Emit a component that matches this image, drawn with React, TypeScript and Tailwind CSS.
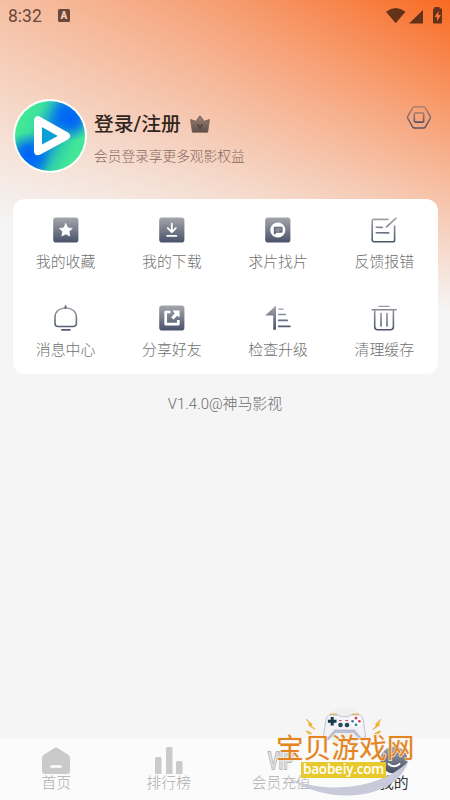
import React from "react";

const g = "url(#steel)";

function Glyph({ children }: { children: React.ReactNode }) {
  return (
    <svg className="h-[26px] w-[26px]" viewBox="0 0 26 26" fill="none" strokeWidth="1.6" strokeLinecap="round" strokeLinejoin="round">
      {children}
    </svg>
  );
}

const Tile = () => <rect x="0.2" y="0.4" width="25.2" height="25.2" rx="2.8" fill={g} />;

const entries: { label: string; icon: React.ReactNode }[] = [
  {
    label: "我的收藏",
    icon: (
      <>
        <Tile />
        <path d="M12.8 6.6l2 4.1 4.5.7-3.2 3.2.7 4.5-4-2.1-4 2.1.7-4.5-3.2-3.2 4.500-.7z" fill="#fff" stroke="#fff" strokeWidth="0.6" />
      </>
    ),
  },
  {
    label: "我的下载",
    icon: (
      <>
        <Tile />
        <path d="M12.8 6.800v8M8.800 11.200l4 4 4-4" stroke="#fff" strokeWidth="1.900" />
        <path d="M8.100 18.800h9.400" stroke="#fff" strokeWidth="1.700" />
      </>
    ),
  },
  {
    label: "求片找片",
    icon: (
      <>
        <Tile />
        <circle cx="12.800" cy="13" r="7.600" fill="#fff" />
        <path d="M9.600 9.800h7a1 1 0 0 1 1 1v4a1 1 0 0 1-1 1h-5l-2 1.600a.5.5 0 0 1-.8-.4v-6.200a1 1 0 0 1 .8-1z" fill="#656b7c" />
        <path d="M11 12h5M11 13.900h3" stroke="#b5b8c0" strokeWidth="0.900" />
      </>
    ),
  },
  {
    label: "反馈报错",
    icon: (
      <g stroke={g}>
        <path d="M17 2.400H3a1.800 1.800 0 0 0-1.800 1.800v18.800a1.800 1.800 0 0 0 1.800 1.800h18.800a1.800 1.800 0 0 0 1.800-1.800V9" />
        <path d="M25 1.200L15.500 9.800M5.300 10.300l6 .03M5.300 15.800l12.400.03" />
      </g>
    ),
  },
  {
    label: "消息中心",
    icon: (
      <g stroke={g}>
        <path d="M2 18.500v-6.300C2 6.600 6.300 3 12.700 3s10.700 3.600 10.700 9.200v6.300a3 3 0 0 1-3 3H5a3 3 0 0 1-3-3z" />
        <path d="M12.500.8h.5v2.600h-.5z" fill="#555c70" stroke="#555c70" strokeWidth="0.900" />
        <path d="M8.800 24.900h8.200" stroke="#555c70" />
      </g>
    ),
  },
  {
    label: "分享好友",
    icon: (
      <>
        <Tile />
        <path d="M11.500 7H6.700v12.200h12.600V15" stroke="#fff" strokeWidth="2.700" strokeLinecap="butt" />
        <path d="M13.700 5.600h6.900v6.700l-2.300-1.500-3.900 3.700-2.300-2.200 3.600-3.800z" fill="#fff" />
      </>
    ),
  },
  {
    label: "检查升级",
    icon: (
      <>
        <path d="M11 .6v24.200H8.200V10.500H.2z" fill={g} />
        <path d="M13.700 4.100l4.300.03" stroke="#969aa4" strokeWidth="1.300" />
        <path d="M13.700 9.500h6.700" stroke="#858a97" strokeWidth="1.400" />
        <path d="M13.700 15.400h8.600" stroke="#6a7183" strokeWidth="1.700" />
        <path d="M13.700 21.300h11.200" stroke="#535b70" strokeWidth="1.800" />
      </>
    ),
  },
  {
    label: "清理缓存",
    icon: (
      <>
        <path d="M8 1.300h10" stroke="#999ca4" strokeWidth="1.300" />
        <path d="M1.100 4.700h24" stroke="#858995" strokeWidth="1.500" />
        <path d="M3.700 5v16.800a3 3 0 0 0 3 3h12.700a3 3 0 0 0 3-3V5" stroke={g} />
        <path d="M10 8.500l.03 12.500M16 8.500l.03 12.500" stroke={g} strokeWidth="1.500" />
      </>
    ),
  },
];

function StatusBar() {
  return (
    <header className="flex h-8 items-center justify-between pl-2 pr-2 text-[#69483b]">
      <div className="flex items-center gap-4">
        <span className="w-[34px] font-[Roboto] text-[17.5px] leading-8">8:32</span>
        <span className="-mt-px flex h-[13px] w-3 items-center justify-center rounded-[1.5px] bg-[#69483b] font-[Roboto] text-[10px] font-black leading-none text-[#f7c9b0]">A</span>
      </div>
      <svg className="h-[18px] w-14" viewBox="0 0 56 18" fill="#653219">
        <path d="M0 4.700Q9.700-2.500 19.500 4.700L9.700 16.300z" />
        <path d="M37 3v13.500H23z" />
        <path fillRule="evenodd" d="M48.500 1.500V0h5v1.500H55a1 1 0 0 1 1 1v13a1 1 0 0 1-1 1h-7a1 1 0 0 1-1-1v-13a1 1 0 0 1 1-1zM52.500 4l-4 6h2.500v4l4-6h-2.500z" />
      </svg>
    </header>
  );
}

function Profile() {
  return (
    <section className="flex h-[74px] pl-[13px] pr-[18px]">
      <svg className="h-[74px] w-[74px]" viewBox="0 0 74 74">
        <defs>
          <linearGradient id="disc" x1="0" y1="0.250" x2="1" y2="0.750">
            <stop offset="0" stopColor="#47ee8c" />
            <stop offset=".24" stopColor="#3be0a0" />
            <stop offset=".45" stopColor="#1093dc" />
            <stop offset=".52" stopColor="#0a88e0" />
            <stop offset=".7" stopColor="#30d0aa" />
            <stop offset=".85" stopColor="#42e696" />
          </linearGradient>
          <radialGradient id="sky">
            <stop offset="0" stopColor="#0060fa" />
            <stop offset=".4" stopColor="#0066f5" stopOpacity=".85" />
            <stop offset="1" stopColor="#0877e8" stopOpacity="0" />
          </radialGradient>
          <clipPath id="round"><circle cx="37" cy="37" r="35" /></clipPath>
        </defs>
        <circle cx="37" cy="37" r="37" fill="#fff" />
        <circle cx="37" cy="37" r="35" fill="url(#disc)" />
        <g clipPath="url(#round)">
          <circle cx="58" cy="19" r="23" fill="url(#sky)" />
          <circle cx="15" cy="56" r="23" fill="url(#sky)" />
        </g>
        <path d="M25 21.200v31L53 37z" fill="#0aa0d6" stroke="#fff" strokeWidth="8" strokeLinejoin="round" />
      </svg>
      <div className="ml-[7px] flex flex-col pt-[11px]">
        <div className="flex items-center gap-[9px]">
          <h1 className="text-[19.8px] font-medium leading-[30px] text-[#302620]">登录/注册</h1>
          <svg className="-mt-[2px] h-[18px] w-5" viewBox="0 0 20 18">
            <defs>
              <linearGradient id="crown" x1="0" y1="0" x2="0" y2="1">
                <stop offset="0" stopColor="#9b8174" />
                <stop offset="1" stopColor="#5e5049" />
              </linearGradient>
            </defs>
            <path d="M.6 4.500l5.200 1.800L10 .8l4.300 5.500 5.100-1.800-1.700 12.700H2.400z" fill="url(#crown)" stroke="#70594e" strokeWidth=".8" strokeLinejoin="round" />
            <path d="M7.500 9l2.500 4.500L12.500 9" fill="none" stroke="#4f3b32" strokeWidth="1.200" />
          </svg>
        </div>
        <p className="mt-[6px] whitespace-nowrap text-[13.7px] font-light leading-5 text-[#86695c]">会员登录享更多观影权益</p>
      </div>
      <svg className="ml-auto mt-[6px] h-[26px] w-[26px]" viewBox="0 0 26 26" fill="none" strokeLinejoin="round">
        <defs>
          <linearGradient id="bolt" x1="0" y1="0" x2="0" y2="1">
            <stop offset="0" stopColor="#ad8170" />
            <stop offset="1" stopColor="#555467" />
          </linearGradient>
        </defs>
        <path d="M8.700 1.700h8.600a2.500 2.500 0 0 1 2.100 1.200l4.800 8.500a2 2 0 0 1 0 2l-4.800 8.500a2.500 2.500 0 0 1-2.100 1.200H8.700a2.500 2.500 0 0 1-2.100-1.200l-4.800-8.500a2 2 0 0 1 0-2l4.800-8.500A2.500 2.500 0 0 1 8.700 1.700z" stroke="url(#bolt)" strokeWidth="1.500" />
        <rect x="8.300" y="7.900" width="9.400" height="9.200" rx="1" stroke="url(#bolt)" strokeWidth="1.600" />
      </svg>
    </section>
  );
}

function Watermark() {
  return (
    <div className="absolute left-[273px] top-[705px] h-[94px] w-[145px]">
      <svg className="absolute inset-0 h-full w-full" viewBox="0 0 145 94">
        <circle cx="72" cy="21" r="19" fill="#f0f0f0" />
        <path d="M11 70C35 87 100 90 135 57C122 97 50 101 11 70z" fill="#c9cad9" />
        <g fill="#f9b820" stroke="#e8963a" strokeWidth=".4">
          <path d="M33 14l6 5-.5 2 4 3.500-1-.2-6-4 .5-2zM108 14l-5.500 5 .5 2-3.500 3.500 1-.2 6-4-.5-2z" />
          <path d="M33 26l3 .5 3 2.500-4-.5zM108 26l-3 .5-4 2.500 5-.5z" />
        </g>
        <path d="M57 8.500h7v3h-7zM79 8.500h7v3h-7z" fill="#f1b64a" />
        <path d="M57 10h9l2 1.500h7L77 10h9c2.500 0 4 3 4.500 6l2 15c.5 5-3.500 6-6 3l-6-6.500h-18L56.500 34c-3 3-6.500 1-6-4L53 15c.5-3 1.500-5 4-5z" fill="#f1f1f6" stroke="#b7b7ca" strokeWidth=".8" />
        <path d="M51 28c0 5 3 5 5 3l5.500-6.500h20L87 31c3 3 5 1 5-2l.5 3c0 4-3.500 5-6 2l-6-6.500h-18L56.500 34c-3 3-6.500 1-6-4z" fill="#bcbdd0" />
        <path d="M57.700 12h3v2.800h2.800v3h-2.800v2.800h-3v-2.800h-2.800v-3h2.800z" fill="#183949" />
        <circle cx="83" cy="16.300" r="5.800" fill="#fff" />
        <circle cx="83" cy="12.900" r="1.500" fill="#d43f51" />
        <circle cx="83" cy="19.700" r="1.500" fill="#2799a7" />
        <circle cx="79.600" cy="16.300" r="1.400" fill="#4b77ad" />
        <circle cx="86.400" cy="16.300" r="1.400" fill="#d43f51" />
        <circle cx="67.500" cy="20" r="2.300" fill="#254858" />
        <circle cx="74" cy="20" r="2.300" fill="#254858" />
        <path d="M66 15.500h2.500M72.500 15.500H75" stroke="#c74657" strokeWidth="1.200" />
      </svg>
      <span className="absolute left-[3px] top-[28px] whitespace-nowrap text-[27.7px] leading-[32px] text-[#e48420] [paint-order:stroke_fill] [-webkit-text-stroke:1.2px_#f6ede4]">宝贝游戏网</span>
      <span className="absolute left-[28px] top-[57px] flex h-4 w-[85px] items-center justify-center bg-[#e8c92b] font-['Open_Sans'] text-[13.5px] font-semibold leading-4 text-white"><span className="-mt-[3px] tracking-[-0.2px]">baobeiy.com</span></span>
    </div>
  );
}

export default function App() {
  return (
    <main className="relative flex h-[800px] w-[450px] flex-col overflow-hidden bg-[#f5f5f5] font-[Roboto,'Noto_Sans_CJK_SC',sans-serif] [background-image:linear-gradient(191deg,#f5f5f500_0px,#f5f5f5_306px),linear-gradient(to_left,#f96a22,#f6915f_250px,#f6aa83)]">
      <svg className="absolute h-0 w-0">
        <defs>
          <linearGradient id="steel" gradientUnits="userSpaceOnUse" x1="0" y1="0" x2="0" y2="26">
            <stop offset="0" stopColor="#a7a8ac" />
            <stop offset="1" stopColor="#465068" />
          </linearGradient>
        </defs>
      </svg>
      <StatusBar />
      <div className="h-[67px]" />
      <Profile />
      <section className="mx-[12.5px] mt-[26px] grid h-[175px] shrink-0 grid-cols-4 rounded-xl bg-white pt-[18px]">
        {entries.map((entry) => (
          <div key={entry.label} className="flex h-[87.5px] flex-col items-center">
            <Glyph>{entry.icon}</Glyph>
            <span className="mt-[9px] text-[14.9px] font-light leading-5 text-[#707070]">{entry.label}</span>
          </div>
        ))}
      </section>
      <p className="mt-5 text-center text-[14.9px] font-light leading-5 text-[#6e6e6e]">V1.4.0@神马影视</p>
      <nav className="mt-auto grid h-[62px] grid-cols-4 bg-[#fbfbfb] pt-2 text-[14.8px] leading-5 text-[#c6c6c6]">
        <div className="flex flex-col items-center">
          <svg className="h-7 w-7" viewBox="0 0 28 28">
            <path d="M12 2.300q2-1.400 4 0l10.500 6.700q1.500 1 1.500 3V25q0 3-3 3H3q-3 0-3-3V12q0-2 1.500-3z" fill="#cacaca" />
            <path d="M8.500 20.500h11" stroke="#fff" strokeWidth="2.500" />
          </svg>
          <span className="-mt-px font-light text-[#aeaeae]">首页</span>
        </div>
        <div className="flex flex-col items-center">
          <svg className="h-7 w-7" viewBox="0 0 28 28" fill="#cacaca">
            <rect y="11" width="6.500" height="18" rx="1.500" />
            <rect x="11" y="1" width="6.500" height="28" rx="1.500" />
            <rect x="21" y="15" width="6.500" height="14" rx="1.500" />
          </svg>
          <span className="-mt-px font-light text-[#aeaeae]">排行榜</span>
        </div>
        <div className="flex flex-col items-center">
          <span className="mt-[2px] flex h-[26px] items-center font-[Roboto] text-[24px] font-medium leading-[26px] text-[#dcdcdc] [paint-order:stroke_fill] [-webkit-text-stroke:1.4px_#a5a5a5]"><span className="scale-x-[0.68]">VIP</span></span>
          <span className="-mt-px font-light text-[#aeaeae]">会员充值</span>
        </div>
        <div className="flex flex-col items-center text-[#333]">
          <svg className="h-7 w-7" viewBox="0 0 28 28">
            <circle cx="14" cy="14" r="13.500" fill={g} />
            <path d="M8.500 18q5.500 4.500 11 0" fill="none" stroke="#fff" strokeWidth="2" strokeLinecap="round" />
          </svg>
          <span className="-mt-px">我的</span>
        </div>
      </nav>
      <Watermark />
    </main>
  );
}
